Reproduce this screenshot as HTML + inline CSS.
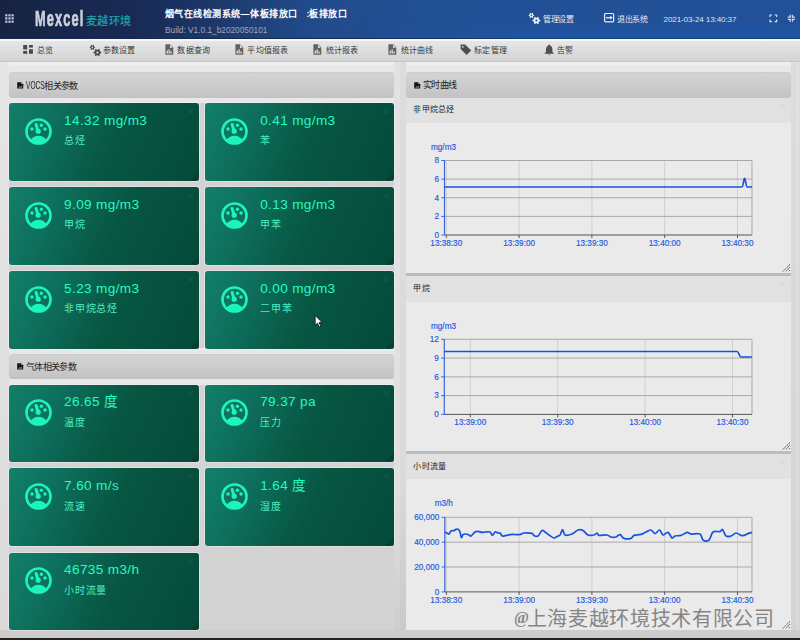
<!DOCTYPE html><html lang="zh-CN"><head><meta charset="utf-8"><style>
*{box-sizing:border-box;margin:0;padding:0}
html,body{width:800px;height:640px;overflow:hidden}
body{position:relative;background:#e8e8e8;font-family:"Liberation Sans",sans-serif;color:#222}
.abs{position:absolute}
.t{position:absolute;white-space:nowrap}
#hdr{left:0;top:0;width:800px;height:38.5px;background:linear-gradient(90deg,#162342 0%,#192a55 17%,#1d386a 27%,#214a8a 38%,#214f94 52%,#21519a 100%);border-bottom:1px solid #122a52}
#nav{left:0;top:38.5px;width:800px;height:23.5px;background:linear-gradient(#f6f6f6 0,#f6f6f6 1.5px,#e6e6e6 2.5px,#d3d3d3 100%);border-bottom:1px solid #c6c6c6}
.navi{position:absolute;top:46.3px;font-size:8px;letter-spacing:0.25px;color:#383838;white-space:nowrap;line-height:10px}
.hd{position:absolute;left:9px;width:385px;height:25.5px;border-radius:3px;background:linear-gradient(#c9c9c9 0,#d3d3d3 1.2px,#cdcdcd 50%,#c2c2c2 100%)}
.hd span{position:absolute;left:16.8px;top:8px;font-size:9px;letter-spacing:-0.6px;line-height:10px;color:#222;white-space:nowrap}
.hd span b{font-weight:normal;font-size:10.6px;display:inline-block;transform:scaleX(0.62);transform-origin:0 50%;width:18.5px;letter-spacing:0;vertical-align:-0.5px}
.card{position:absolute;width:189.4px;box-shadow:0 0 0 0.8px rgba(245,245,245,0.55);height:77.5px;border-radius:3px;background:linear-gradient(115deg,#128069 0%,#0d6e5b 25%,#075642 55%,#044a3b 100%);overflow:hidden}
.card .v{position:absolute;left:55px;top:9.8px;font-size:13.6px;line-height:16px;color:#22fcc4;white-space:nowrap;letter-spacing:0.35px}
.card .l{position:absolute;left:55px;top:32.3px;font-size:10px;letter-spacing:0.75px;line-height:12px;color:#50ecc0;white-space:nowrap}
.card svg.g{position:absolute;left:16px;top:14.8px;width:27px;height:27px}
.card svg.x{position:absolute;right:4.6px;top:5px;width:7px;height:7px}
.card svg.rz{position:absolute;right:0;bottom:0;width:9px;height:9px}
.sub{position:absolute;left:406px;width:385px;background:#eaeaea}
.sub .sh{position:absolute;left:0;top:0;width:385px;height:25px;background:#e1e1e1}
.sub .sh span{position:absolute;left:7.3px;top:7px;font-size:8px;letter-spacing:0.3px;line-height:10px;color:#222;white-space:nowrap}
.cl{font-family:"Liberation Sans",sans-serif;font-size:8.2px;fill:#2258e0;stroke:#2258e0;stroke-width:0.15px}
</style></head><body>
<div id="hdr" class="abs"></div><div class="abs" style="left:350px;top:20px;width:450px;height:18.5px;background:linear-gradient(rgba(30,100,190,0),rgba(30,100,190,0.35));-webkit-mask-image:linear-gradient(90deg,transparent,#000 40%)"></div>
<svg class="abs" style="left:4px;top:13px" width="12" height="11" viewBox="0 0 12 11"><g fill="#b8c4e8">
<rect x="1.2" y="1.2" width="2.2" height="2.2"/><rect x="4.4" y="1.2" width="2.2" height="2.2"/><rect x="7.5" y="1.2" width="2.2" height="2.2"/>
<rect x="1.2" y="4.3" width="2.2" height="2.2"/><rect x="4.4" y="4.3" width="2.2" height="2.2"/><rect x="7.5" y="4.3" width="2.2" height="2.2"/>
<rect x="1.2" y="7.6" width="2.2" height="2.2"/><rect x="4.4" y="7.6" width="2.2" height="2.2"/><rect x="7.5" y="7.6" width="2.2" height="2.2"/></g></svg>
<div class="t" style="left:35.4px;top:6px;font-size:21.3px;font-weight:bold;color:#cdd2dc;line-height:26px;letter-spacing:1.9px;-webkit-text-stroke:0.7px #cdd2dc;transform:scaleX(0.6);transform-origin:0 0">Mexcel</div>
<div class="t" style="left:85.5px;top:15px;font-size:11px;letter-spacing:0.6px;color:#1fa6a9;line-height:13px;-webkit-text-stroke:0.2px #1fa6a9">麦越环境</div>
<div class="t" style="left:164.5px;top:8.5px;font-size:9px;letter-spacing:0.5px;font-weight:bold;color:#fff;line-height:11px">烟气在线检测系统—体板排放口</div><div class="t" style="left:306.5px;top:8.5px;font-size:9px;font-weight:bold;color:#fff;line-height:11px">:</div><div class="t" style="left:309px;top:8.5px;font-size:9px;letter-spacing:0.5px;font-weight:bold;color:#fff;line-height:11px">板排放口</div>
<div class="t" style="left:165px;top:24.8px;font-size:8.3px;color:#9fa9bd;line-height:10px">Build: V1.0.1_b2020050101</div>
<svg class="abs" style="left:528px;top:11.5px" width="14" height="14" viewBox="0 0 14 14"><path d="M5.30 2.78 L6.06 2.95 L6.06 3.85 L5.30 4.02 L4.88 4.74 L5.12 5.48 L4.34 5.93 L3.82 5.35 L2.98 5.35 L2.46 5.93 L1.68 5.48 L1.92 4.74 L1.50 4.02 L0.74 3.85 L0.74 2.95 L1.50 2.78 L1.92 2.06 L1.68 1.32 L2.46 0.87 L2.98 1.45 L3.82 1.45 L4.34 0.87 L5.12 1.32 L4.88 2.06Z" fill="#f0f3f8"/><circle cx="3.4" cy="3.4" r="0.8" fill="#1e4a90"/><path d="M11.14 7.61 L12.25 7.85 L12.25 9.15 L11.14 9.39 L10.54 10.43 L10.89 11.51 L9.76 12.16 L9.00 11.32 L7.80 11.32 L7.04 12.16 L5.91 11.51 L6.26 10.43 L5.66 9.39 L4.55 9.15 L4.55 7.85 L5.66 7.61 L6.26 6.57 L5.91 5.49 L7.04 4.84 L7.80 5.68 L9.00 5.68 L9.76 4.84 L10.89 5.49 L10.54 6.57Z" fill="#f0f3f8"/><circle cx="8.4" cy="8.5" r="1.1" fill="#1e4a90"/></svg>
<div class="t" style="left:543px;top:15.2px;font-size:8px;letter-spacing:-0.5px;color:#e6eaf2;line-height:10px">管理设置</div>
<svg class="abs" style="left:603px;top:12px" width="12" height="11" viewBox="0 0 12 11"><rect x="1.6" y="1.5" width="9" height="8.4" rx="1" fill="none" stroke="#e8eef8" stroke-width="1.2"/><path d="M3 5.7 L8 5.7" stroke="#e8eef8" stroke-width="1.3"/><path d="M7.2 3.6 L9.6 5.7 L7.2 7.8Z" fill="#e8eef8"/></svg>
<div class="t" style="left:617px;top:15.2px;font-size:8px;letter-spacing:-0.5px;color:#e6eaf2;line-height:10px">退出系统</div>
<div class="t" style="left:663.5px;top:14.6px;font-size:8.1px;letter-spacing:-0.12px;color:#dfe5f0;line-height:10px">2021-03-24 13:40:37</div>
<svg class="abs" style="left:768.5px;top:14px" width="9" height="9" viewBox="0 0 9 9"><path d="M1 3V1H3M5.6 1H7.6V3M7.6 5.6V7.6H5.6M3 7.6H1V5.6" fill="none" stroke="#d8e0ee" stroke-width="1.2"/></svg>
<svg class="abs" style="left:786.5px;top:14px" width="9" height="9" viewBox="0 0 9 9"><path d="M0.8 3.2H3.2V0.8M5.4 0.8V3.2H7.8M7.8 5.4H5.4V7.8M3.2 7.8V5.4H0.8" fill="none" stroke="#d8e0ee" stroke-width="1.2"/></svg>
<div id="nav" class="abs"></div>
<svg class="abs" style="left:23px;top:45px" width="11" height="9" viewBox="0 0 11 9"><g fill="#4a4a4a"><rect x="0.2" y="0" width="4" height="4.5"/><rect x="0.2" y="6" width="4" height="2.8"/><rect x="6" y="0" width="3.9" height="2.6"/><rect x="6" y="4.2" width="3.9" height="4.6"/></g></svg>
<svg class="abs" style="left:88.5px;top:43.5px" width="14" height="14" viewBox="0 0 14 14"><path d="M5.30 2.78 L6.06 2.95 L6.06 3.85 L5.30 4.02 L4.88 4.74 L5.12 5.48 L4.34 5.93 L3.82 5.35 L2.98 5.35 L2.46 5.93 L1.68 5.48 L1.92 4.74 L1.50 4.02 L0.74 3.85 L0.74 2.95 L1.50 2.78 L1.92 2.06 L1.68 1.32 L2.46 0.87 L2.98 1.45 L3.82 1.45 L4.34 0.87 L5.12 1.32 L4.88 2.06Z" fill="#4a4a4a"/><circle cx="3.4" cy="3.4" r="0.8" fill="#e6e6e6"/><path d="M11.14 7.61 L12.25 7.85 L12.25 9.15 L11.14 9.39 L10.54 10.43 L10.89 11.51 L9.76 12.16 L9.00 11.32 L7.80 11.32 L7.04 12.16 L5.91 11.51 L6.26 10.43 L5.66 9.39 L4.55 9.15 L4.55 7.85 L5.66 7.61 L6.26 6.57 L5.91 5.49 L7.04 4.84 L7.80 5.68 L9.00 5.68 L9.76 4.84 L10.89 5.49 L10.54 6.57Z" fill="#4a4a4a"/><circle cx="8.4" cy="8.5" r="1.1" fill="#e6e6e6"/></svg>
<svg class="abs" style="left:164.5px;top:44px" width="9" height="11" viewBox="0 0 9 11"><path d="M0.4 0.9 Q0.4 0.3 1.0 0.3 L5.0 0.3 L8.3 3.6 L8.3 10.1 Q8.3 10.7 7.7 10.7 L1.0 10.7 Q0.4 10.7 0.4 10.1Z" fill="#626262"/><path d="M5.0 1.0 L5.0 3.7 L7.7 3.7Z" fill="#f0f0f0"/><rect x="1.7" y="6.6" width="1.1" height="3.0" fill="#f4f4f4"/><rect x="3.6" y="5.4" width="1.1" height="4.2" fill="#f4f4f4"/><rect x="5.5" y="7.4" width="1.1" height="2.2" fill="#f4f4f4"/></svg>
<svg class="abs" style="left:234.5px;top:44px" width="9" height="11" viewBox="0 0 9 11"><path d="M0.4 0.9 Q0.4 0.3 1.0 0.3 L5.0 0.3 L8.3 3.6 L8.3 10.1 Q8.3 10.7 7.7 10.7 L1.0 10.7 Q0.4 10.7 0.4 10.1Z" fill="#626262"/><path d="M5.0 1.0 L5.0 3.7 L7.7 3.7Z" fill="#f0f0f0"/><rect x="1.7" y="6.6" width="1.1" height="3.0" fill="#f4f4f4"/><rect x="3.6" y="5.4" width="1.1" height="4.2" fill="#f4f4f4"/><rect x="5.5" y="7.4" width="1.1" height="2.2" fill="#f4f4f4"/></svg>
<svg class="abs" style="left:312.5px;top:44px" width="9" height="11" viewBox="0 0 9 11"><path d="M0.4 0.9 Q0.4 0.3 1.0 0.3 L5.0 0.3 L8.3 3.6 L8.3 10.1 Q8.3 10.7 7.7 10.7 L1.0 10.7 Q0.4 10.7 0.4 10.1Z" fill="#626262"/><path d="M5.0 1.0 L5.0 3.7 L7.7 3.7Z" fill="#f0f0f0"/><rect x="1.7" y="6.6" width="1.1" height="3.0" fill="#f4f4f4"/><rect x="3.6" y="5.4" width="1.1" height="4.2" fill="#f4f4f4"/><rect x="5.5" y="7.4" width="1.1" height="2.2" fill="#f4f4f4"/></svg>
<svg class="abs" style="left:387.5px;top:44px" width="9" height="11" viewBox="0 0 9 11"><path d="M0.4 0.9 Q0.4 0.3 1.0 0.3 L5.0 0.3 L8.3 3.6 L8.3 10.1 Q8.3 10.7 7.7 10.7 L1.0 10.7 Q0.4 10.7 0.4 10.1Z" fill="#626262"/><path d="M5.0 1.0 L5.0 3.7 L7.7 3.7Z" fill="#f0f0f0"/><rect x="1.7" y="6.6" width="1.1" height="3.0" fill="#f4f4f4"/><rect x="3.6" y="5.4" width="1.1" height="4.2" fill="#f4f4f4"/><rect x="5.5" y="7.4" width="1.1" height="2.2" fill="#f4f4f4"/></svg>
<svg class="abs" style="left:460px;top:43.5px" width="12" height="12" viewBox="0 0 12 12"><path d="M0.6 1.2 Q0.6 0.5 1.3 0.5 L5.2 0.5 L11.2 6.5 L6.6 11.1 L0.6 5.1Z" fill="#4f4f4f"/><circle cx="2.8" cy="2.8" r="0.9" fill="#e4e4e4"/></svg>
<svg class="abs" style="left:543.5px;top:43.5px" width="11" height="12" viewBox="0 0 11 12"><path d="M5.2 0.6 Q6 0.6 6 1.3 Q8.4 2.2 8.4 5 L8.4 7.8 L10 9.8 L0.4 9.8 L2 7.8 L2 5 Q2 2.2 4.4 1.3 Q4.4 0.6 5.2 0.6Z" fill="#505050"/><path d="M4 10.4 Q5.2 12 6.4 10.4Z" fill="#505050"/></svg>
<div class="navi" style="left:37px">总览</div>
<div class="navi" style="left:102.6px">参数设置</div>
<div class="navi" style="left:177.3px">数据查询</div>
<div class="navi" style="left:247.3px">平均值报表</div>
<div class="navi" style="left:325.6px">统计报表</div>
<div class="navi" style="left:400.6px">统计曲线</div>
<div class="navi" style="left:474px">标定管理</div>
<div class="navi" style="left:557px">告警</div>
<div class="abs" style="left:0;top:62px;width:800px;height:2.5px;background:#eeeeee"></div>
<div class="abs" style="left:0;top:62px;width:9px;height:578px;background:linear-gradient(#e6e6e6,#dadada)"></div>
<div class="abs" style="left:394px;top:62px;width:11.5px;height:578px;background:linear-gradient(#e2e2e2 0,#e0e0e0 420px,#cdcdcd 100%)"></div><div class="abs" style="left:400px;top:62px;width:5.5px;height:578px;background:rgba(0,0,0,0.025)"></div>
<div class="abs" style="left:791px;top:62px;width:9px;height:578px;background:linear-gradient(#dddddd,#d4d4d4)"></div><div class="abs" style="left:796.5px;top:62px;width:1px;height:578px;background:rgba(255,255,255,0.25)"></div>
<div class="abs" style="left:9px;top:103px;width:385px;height:245px;background:#d2d2d2"></div>
<div class="abs" style="left:9px;top:384.5px;width:385px;height:246px;background:#d3d3d3"></div>
<div class="abs" style="left:0;top:630px;width:800px;height:8px;background:#cdcdcd"></div>
<div class="abs" style="left:0;top:638px;width:800px;height:2px;background:#222"></div>
<div class="hd" style="top:72px"><svg class="abs" style="left:8px;top:9.6px" width="7" height="7" viewBox="0 0 7 7"><path d="M0.2 0.2 L4.2 0.2 L6.2 2.2 L6.2 6.6 L0.2 6.6Z" fill="#141418"/><path d="M4.4 0.6 L4.4 2.0 L5.8 2.0Z" fill="#d8d8e0"/><path d="M1.2 5.8 L2.6 3.9 L3.5 4.8 L4.6 3.4 L5.4 5.8Z" fill="#7c74a4"/></svg><span><b>VOCS</b>相关参数</span></div>
<div class="hd" style="top:353.5px"><svg class="abs" style="left:8px;top:9.6px" width="7" height="7" viewBox="0 0 7 7"><path d="M0.2 0.2 L4.2 0.2 L6.2 2.2 L6.2 6.6 L0.2 6.6Z" fill="#141418"/><path d="M4.4 0.6 L4.4 2.0 L5.8 2.0Z" fill="#d8d8e0"/><path d="M1.2 5.8 L2.6 3.9 L3.5 4.8 L4.6 3.4 L5.4 5.8Z" fill="#7c74a4"/></svg><span>气体相关参数</span></div>
<div class="card" style="left:9.1px;top:103px;width:189.7px"><svg class="g" viewBox="0 0 27 27"><circle cx="13.5" cy="13.5" r="12" fill="none" stroke="#1cf4be" stroke-width="2.7"/>
<path d="M5.8 21.6 A9.6 9.6 0 0 1 21.2 21.6 A10.3 10.3 0 0 1 5.8 21.6Z" fill="#1cf4be"/>
<circle cx="13.2" cy="13.2" r="2.6" fill="#1cf4be"/><path d="M11.6 13.6 L9.4 5.9 Q10.6 4.6 12.3 5.3 L14.7 12.9Z" fill="#1cf4be"/>
<circle cx="7.0" cy="11.0" r="1.75" fill="#1cf4be"/><circle cx="16.4" cy="7.3" r="1.75" fill="#1cf4be"/><circle cx="20.0" cy="11.0" r="1.75" fill="#1cf4be"/></svg><div class="v">14.32 mg/m3</div><div class="l">总烃</div><svg class="x" viewBox="0 0 7 7"><path d="M0.6 0.6L6.4 6.4M6.4 0.6L0.6 6.4" stroke="#1c6553" stroke-width="0.75"/></svg><svg class="rz" viewBox="0 0 9 9"><path d="M9 1L1 9M9 4L4 9M9 7L7 9" stroke="#0b2a22" stroke-width="0.9"/></svg></div>
<div class="card" style="left:205.2px;top:103px;width:189.0px"><svg class="g" viewBox="0 0 27 27"><circle cx="13.5" cy="13.5" r="12" fill="none" stroke="#1cf4be" stroke-width="2.7"/>
<path d="M5.8 21.6 A9.6 9.6 0 0 1 21.2 21.6 A10.3 10.3 0 0 1 5.8 21.6Z" fill="#1cf4be"/>
<circle cx="13.2" cy="13.2" r="2.6" fill="#1cf4be"/><path d="M11.6 13.6 L9.4 5.9 Q10.6 4.6 12.3 5.3 L14.7 12.9Z" fill="#1cf4be"/>
<circle cx="7.0" cy="11.0" r="1.75" fill="#1cf4be"/><circle cx="16.4" cy="7.3" r="1.75" fill="#1cf4be"/><circle cx="20.0" cy="11.0" r="1.75" fill="#1cf4be"/></svg><div class="v">0.41 mg/m3</div><div class="l">苯</div><svg class="x" viewBox="0 0 7 7"><path d="M0.6 0.6L6.4 6.4M6.4 0.6L0.6 6.4" stroke="#1c6553" stroke-width="0.75"/></svg><svg class="rz" viewBox="0 0 9 9"><path d="M9 1L1 9M9 4L4 9M9 7L7 9" stroke="#0b2a22" stroke-width="0.9"/></svg></div>
<div class="card" style="left:9.1px;top:187px;width:189.7px"><svg class="g" viewBox="0 0 27 27"><circle cx="13.5" cy="13.5" r="12" fill="none" stroke="#1cf4be" stroke-width="2.7"/>
<path d="M5.8 21.6 A9.6 9.6 0 0 1 21.2 21.6 A10.3 10.3 0 0 1 5.8 21.6Z" fill="#1cf4be"/>
<circle cx="13.2" cy="13.2" r="2.6" fill="#1cf4be"/><path d="M11.6 13.6 L9.4 5.9 Q10.6 4.6 12.3 5.3 L14.7 12.9Z" fill="#1cf4be"/>
<circle cx="7.0" cy="11.0" r="1.75" fill="#1cf4be"/><circle cx="16.4" cy="7.3" r="1.75" fill="#1cf4be"/><circle cx="20.0" cy="11.0" r="1.75" fill="#1cf4be"/></svg><div class="v">9.09 mg/m3</div><div class="l">甲烷</div><svg class="x" viewBox="0 0 7 7"><path d="M0.6 0.6L6.4 6.4M6.4 0.6L0.6 6.4" stroke="#1c6553" stroke-width="0.75"/></svg><svg class="rz" viewBox="0 0 9 9"><path d="M9 1L1 9M9 4L4 9M9 7L7 9" stroke="#0b2a22" stroke-width="0.9"/></svg></div>
<div class="card" style="left:205.2px;top:187px;width:189.0px"><svg class="g" viewBox="0 0 27 27"><circle cx="13.5" cy="13.5" r="12" fill="none" stroke="#1cf4be" stroke-width="2.7"/>
<path d="M5.8 21.6 A9.6 9.6 0 0 1 21.2 21.6 A10.3 10.3 0 0 1 5.8 21.6Z" fill="#1cf4be"/>
<circle cx="13.2" cy="13.2" r="2.6" fill="#1cf4be"/><path d="M11.6 13.6 L9.4 5.9 Q10.6 4.6 12.3 5.3 L14.7 12.9Z" fill="#1cf4be"/>
<circle cx="7.0" cy="11.0" r="1.75" fill="#1cf4be"/><circle cx="16.4" cy="7.3" r="1.75" fill="#1cf4be"/><circle cx="20.0" cy="11.0" r="1.75" fill="#1cf4be"/></svg><div class="v">0.13 mg/m3</div><div class="l">甲苯</div><svg class="x" viewBox="0 0 7 7"><path d="M0.6 0.6L6.4 6.4M6.4 0.6L0.6 6.4" stroke="#1c6553" stroke-width="0.75"/></svg><svg class="rz" viewBox="0 0 9 9"><path d="M9 1L1 9M9 4L4 9M9 7L7 9" stroke="#0b2a22" stroke-width="0.9"/></svg></div>
<div class="card" style="left:9.1px;top:271px;width:189.7px"><svg class="g" viewBox="0 0 27 27"><circle cx="13.5" cy="13.5" r="12" fill="none" stroke="#1cf4be" stroke-width="2.7"/>
<path d="M5.8 21.6 A9.6 9.6 0 0 1 21.2 21.6 A10.3 10.3 0 0 1 5.8 21.6Z" fill="#1cf4be"/>
<circle cx="13.2" cy="13.2" r="2.6" fill="#1cf4be"/><path d="M11.6 13.6 L9.4 5.9 Q10.6 4.6 12.3 5.3 L14.7 12.9Z" fill="#1cf4be"/>
<circle cx="7.0" cy="11.0" r="1.75" fill="#1cf4be"/><circle cx="16.4" cy="7.3" r="1.75" fill="#1cf4be"/><circle cx="20.0" cy="11.0" r="1.75" fill="#1cf4be"/></svg><div class="v">5.23 mg/m3</div><div class="l">非甲烷总烃</div><svg class="x" viewBox="0 0 7 7"><path d="M0.6 0.6L6.4 6.4M6.4 0.6L0.6 6.4" stroke="#1c6553" stroke-width="0.75"/></svg><svg class="rz" viewBox="0 0 9 9"><path d="M9 1L1 9M9 4L4 9M9 7L7 9" stroke="#0b2a22" stroke-width="0.9"/></svg></div>
<div class="card" style="left:205.2px;top:271px;width:189.0px"><svg class="g" viewBox="0 0 27 27"><circle cx="13.5" cy="13.5" r="12" fill="none" stroke="#1cf4be" stroke-width="2.7"/>
<path d="M5.8 21.6 A9.6 9.6 0 0 1 21.2 21.6 A10.3 10.3 0 0 1 5.8 21.6Z" fill="#1cf4be"/>
<circle cx="13.2" cy="13.2" r="2.6" fill="#1cf4be"/><path d="M11.6 13.6 L9.4 5.9 Q10.6 4.6 12.3 5.3 L14.7 12.9Z" fill="#1cf4be"/>
<circle cx="7.0" cy="11.0" r="1.75" fill="#1cf4be"/><circle cx="16.4" cy="7.3" r="1.75" fill="#1cf4be"/><circle cx="20.0" cy="11.0" r="1.75" fill="#1cf4be"/></svg><div class="v">0.00 mg/m3</div><div class="l">二甲苯</div><svg class="x" viewBox="0 0 7 7"><path d="M0.6 0.6L6.4 6.4M6.4 0.6L0.6 6.4" stroke="#1c6553" stroke-width="0.75"/></svg><svg class="rz" viewBox="0 0 9 9"><path d="M9 1L1 9M9 4L4 9M9 7L7 9" stroke="#0b2a22" stroke-width="0.9"/></svg></div>
<div class="card" style="left:9.1px;top:384.5px;width:189.7px"><svg class="g" viewBox="0 0 27 27"><circle cx="13.5" cy="13.5" r="12" fill="none" stroke="#1cf4be" stroke-width="2.7"/>
<path d="M5.8 21.6 A9.6 9.6 0 0 1 21.2 21.6 A10.3 10.3 0 0 1 5.8 21.6Z" fill="#1cf4be"/>
<circle cx="13.2" cy="13.2" r="2.6" fill="#1cf4be"/><path d="M11.6 13.6 L9.4 5.9 Q10.6 4.6 12.3 5.3 L14.7 12.9Z" fill="#1cf4be"/>
<circle cx="7.0" cy="11.0" r="1.75" fill="#1cf4be"/><circle cx="16.4" cy="7.3" r="1.75" fill="#1cf4be"/><circle cx="20.0" cy="11.0" r="1.75" fill="#1cf4be"/></svg><div class="v">26.65 度</div><div class="l">温度</div><svg class="x" viewBox="0 0 7 7"><path d="M0.6 0.6L6.4 6.4M6.4 0.6L0.6 6.4" stroke="#1c6553" stroke-width="0.75"/></svg><svg class="rz" viewBox="0 0 9 9"><path d="M9 1L1 9M9 4L4 9M9 7L7 9" stroke="#0b2a22" stroke-width="0.9"/></svg></div>
<div class="card" style="left:205.2px;top:384.5px;width:189.0px"><svg class="g" viewBox="0 0 27 27"><circle cx="13.5" cy="13.5" r="12" fill="none" stroke="#1cf4be" stroke-width="2.7"/>
<path d="M5.8 21.6 A9.6 9.6 0 0 1 21.2 21.6 A10.3 10.3 0 0 1 5.8 21.6Z" fill="#1cf4be"/>
<circle cx="13.2" cy="13.2" r="2.6" fill="#1cf4be"/><path d="M11.6 13.6 L9.4 5.9 Q10.6 4.6 12.3 5.3 L14.7 12.9Z" fill="#1cf4be"/>
<circle cx="7.0" cy="11.0" r="1.75" fill="#1cf4be"/><circle cx="16.4" cy="7.3" r="1.75" fill="#1cf4be"/><circle cx="20.0" cy="11.0" r="1.75" fill="#1cf4be"/></svg><div class="v">79.37 pa</div><div class="l">压力</div><svg class="x" viewBox="0 0 7 7"><path d="M0.6 0.6L6.4 6.4M6.4 0.6L0.6 6.4" stroke="#1c6553" stroke-width="0.75"/></svg><svg class="rz" viewBox="0 0 9 9"><path d="M9 1L1 9M9 4L4 9M9 7L7 9" stroke="#0b2a22" stroke-width="0.9"/></svg></div>
<div class="card" style="left:9.1px;top:468.3px;width:189.7px"><svg class="g" viewBox="0 0 27 27"><circle cx="13.5" cy="13.5" r="12" fill="none" stroke="#1cf4be" stroke-width="2.7"/>
<path d="M5.8 21.6 A9.6 9.6 0 0 1 21.2 21.6 A10.3 10.3 0 0 1 5.8 21.6Z" fill="#1cf4be"/>
<circle cx="13.2" cy="13.2" r="2.6" fill="#1cf4be"/><path d="M11.6 13.6 L9.4 5.9 Q10.6 4.6 12.3 5.3 L14.7 12.9Z" fill="#1cf4be"/>
<circle cx="7.0" cy="11.0" r="1.75" fill="#1cf4be"/><circle cx="16.4" cy="7.3" r="1.75" fill="#1cf4be"/><circle cx="20.0" cy="11.0" r="1.75" fill="#1cf4be"/></svg><div class="v">7.60 m/s</div><div class="l">流速</div><svg class="x" viewBox="0 0 7 7"><path d="M0.6 0.6L6.4 6.4M6.4 0.6L0.6 6.4" stroke="#1c6553" stroke-width="0.75"/></svg><svg class="rz" viewBox="0 0 9 9"><path d="M9 1L1 9M9 4L4 9M9 7L7 9" stroke="#0b2a22" stroke-width="0.9"/></svg></div>
<div class="card" style="left:205.2px;top:468.3px;width:189.0px"><svg class="g" viewBox="0 0 27 27"><circle cx="13.5" cy="13.5" r="12" fill="none" stroke="#1cf4be" stroke-width="2.7"/>
<path d="M5.8 21.6 A9.6 9.6 0 0 1 21.2 21.6 A10.3 10.3 0 0 1 5.8 21.6Z" fill="#1cf4be"/>
<circle cx="13.2" cy="13.2" r="2.6" fill="#1cf4be"/><path d="M11.6 13.6 L9.4 5.9 Q10.6 4.6 12.3 5.3 L14.7 12.9Z" fill="#1cf4be"/>
<circle cx="7.0" cy="11.0" r="1.75" fill="#1cf4be"/><circle cx="16.4" cy="7.3" r="1.75" fill="#1cf4be"/><circle cx="20.0" cy="11.0" r="1.75" fill="#1cf4be"/></svg><div class="v">1.64 度</div><div class="l">湿度</div><svg class="x" viewBox="0 0 7 7"><path d="M0.6 0.6L6.4 6.4M6.4 0.6L0.6 6.4" stroke="#1c6553" stroke-width="0.75"/></svg><svg class="rz" viewBox="0 0 9 9"><path d="M9 1L1 9M9 4L4 9M9 7L7 9" stroke="#0b2a22" stroke-width="0.9"/></svg></div>
<div class="card" style="left:9.1px;top:552.5px;width:189.7px"><svg class="g" viewBox="0 0 27 27"><circle cx="13.5" cy="13.5" r="12" fill="none" stroke="#1cf4be" stroke-width="2.7"/>
<path d="M5.8 21.6 A9.6 9.6 0 0 1 21.2 21.6 A10.3 10.3 0 0 1 5.8 21.6Z" fill="#1cf4be"/>
<circle cx="13.2" cy="13.2" r="2.6" fill="#1cf4be"/><path d="M11.6 13.6 L9.4 5.9 Q10.6 4.6 12.3 5.3 L14.7 12.9Z" fill="#1cf4be"/>
<circle cx="7.0" cy="11.0" r="1.75" fill="#1cf4be"/><circle cx="16.4" cy="7.3" r="1.75" fill="#1cf4be"/><circle cx="20.0" cy="11.0" r="1.75" fill="#1cf4be"/></svg><div class="v">46735 m3/h</div><div class="l">小时流量</div><svg class="x" viewBox="0 0 7 7"><path d="M0.6 0.6L6.4 6.4M6.4 0.6L0.6 6.4" stroke="#1c6553" stroke-width="0.75"/></svg><svg class="rz" viewBox="0 0 9 9"><path d="M9 1L1 9M9 4L4 9M9 7L7 9" stroke="#0b2a22" stroke-width="0.9"/></svg></div>
<div class="sub" style="top:97.5px;height:175.3px"><div class="sh"><span>非甲烷总烃</span></div><svg class="abs" style="right:5px;top:5px" width="8" height="7" viewBox="0 0 8 7"><path d="M1 0.5L7 6.5M7 0.5L1 6.5" stroke="#d2d2d2" stroke-width="0.8"/></svg><svg class="abs" style="right:0.5px;bottom:0.5px" width="9" height="8" viewBox="0 0 9 8"><path d="M8 0.3L0.8 7.5M8 3.2L3.7 7.5M8 6.2L6.7 7.5" stroke="#3a3a3a" stroke-width="1" stroke-dasharray="1.1 0.5"/></svg></div>
<div class="abs" style="left:406px;top:272.8px;width:385px;height:2.8px;background:#bababa"></div>
<div class="sub" style="top:275.6px;height:175px"><div class="sh" style="height:26px"><span style="top:8.4px">甲烷</span></div><svg class="abs" style="right:5px;top:5px" width="8" height="7" viewBox="0 0 8 7"><path d="M1 0.5L7 6.5M7 0.5L1 6.5" stroke="#d2d2d2" stroke-width="0.8"/></svg><svg class="abs" style="right:0.5px;bottom:0.5px" width="9" height="8" viewBox="0 0 9 8"><path d="M8 0.3L0.8 7.5M8 3.2L3.7 7.5M8 6.2L6.7 7.5" stroke="#3a3a3a" stroke-width="1" stroke-dasharray="1.1 0.5"/></svg></div>
<div class="abs" style="left:406px;top:450.6px;width:385px;height:3.8px;background:#bdbdbd"></div>
<div class="sub" style="top:454.4px;height:175px"><div class="sh"><span style="top:8px">小时流量</span></div><svg class="abs" style="right:5px;top:5px" width="8" height="7" viewBox="0 0 8 7"><path d="M1 0.5L7 6.5M7 0.5L1 6.5" stroke="#d2d2d2" stroke-width="0.8"/></svg><svg class="abs" style="right:0.5px;bottom:0.5px" width="9" height="8" viewBox="0 0 9 8"><path d="M8 0.3L0.8 7.5M8 3.2L3.7 7.5M8 6.2L6.7 7.5" stroke="#3a3a3a" stroke-width="1" stroke-dasharray="1.1 0.5"/></svg></div>
<div class="hd" style="left:406px;top:72px"><svg class="abs" style="left:8px;top:9.6px" width="7" height="7" viewBox="0 0 7 7"><path d="M0.2 0.2 L4.2 0.2 L6.2 2.2 L6.2 6.6 L0.2 6.6Z" fill="#141418"/><path d="M4.4 0.6 L4.4 2.0 L5.8 2.0Z" fill="#d8d8e0"/><path d="M1.2 5.8 L2.6 3.9 L3.5 4.8 L4.6 3.4 L5.4 5.8Z" fill="#7c74a4"/></svg><span>实时曲线</span></div>
<svg class="abs" style="left:0;top:0" width="800" height="640" viewBox="0 0 800 640">
<line x1="446.3" y1="160.5" x2="446.3" y2="235" stroke="#cfcfcf" stroke-width="1"/>
<line x1="519.1" y1="160.5" x2="519.1" y2="235" stroke="#cfcfcf" stroke-width="1"/>
<line x1="591.9" y1="160.5" x2="591.9" y2="235" stroke="#cfcfcf" stroke-width="1"/>
<line x1="664.7" y1="160.5" x2="664.7" y2="235" stroke="#cfcfcf" stroke-width="1"/>
<line x1="737.5" y1="160.5" x2="737.5" y2="235" stroke="#cfcfcf" stroke-width="1"/>
<line x1="752" y1="160.5" x2="752" y2="235" stroke="#a9a9a9" stroke-width="1"/>
<line x1="444.5" y1="216.4" x2="752" y2="216.4" stroke="#a9a9a9" stroke-width="1"/>
<line x1="444.5" y1="197.75" x2="752" y2="197.75" stroke="#a9a9a9" stroke-width="1"/>
<line x1="444.5" y1="179.1" x2="752" y2="179.1" stroke="#a9a9a9" stroke-width="1"/>
<line x1="444.5" y1="160.5" x2="752" y2="160.5" stroke="#a9a9a9" stroke-width="1"/>
<line x1="444.5" y1="235" x2="752" y2="235" stroke="#555" stroke-width="1"/>
<line x1="446.3" y1="235" x2="446.3" y2="238" stroke="#555" stroke-width="1"/>
<line x1="519.1" y1="235" x2="519.1" y2="238" stroke="#555" stroke-width="1"/>
<line x1="591.9" y1="235" x2="591.9" y2="238" stroke="#555" stroke-width="1"/>
<line x1="664.7" y1="235" x2="664.7" y2="238" stroke="#555" stroke-width="1"/>
<line x1="737.5" y1="235" x2="737.5" y2="238" stroke="#555" stroke-width="1"/>
<line x1="444.5" y1="160.5" x2="444.5" y2="235" stroke="#3a66dd" stroke-width="1.2"/>
<line x1="441.3" y1="235" x2="444.5" y2="235" stroke="#3a66dd" stroke-width="1"/>
<line x1="441.3" y1="216.4" x2="444.5" y2="216.4" stroke="#3a66dd" stroke-width="1"/>
<line x1="441.3" y1="197.75" x2="444.5" y2="197.75" stroke="#3a66dd" stroke-width="1"/>
<line x1="441.3" y1="179.1" x2="444.5" y2="179.1" stroke="#3a66dd" stroke-width="1"/>
<line x1="441.3" y1="160.5" x2="444.5" y2="160.5" stroke="#3a66dd" stroke-width="1"/>
<text class="cl" x="439.0" y="237.8" text-anchor="end">0</text>
<text class="cl" x="439.0" y="219.20000000000002" text-anchor="end">2</text>
<text class="cl" x="439.0" y="200.55" text-anchor="end">4</text>
<text class="cl" x="439.0" y="181.9" text-anchor="end">6</text>
<text class="cl" x="439.0" y="163.3" text-anchor="end">8</text>
<text class="cl" x="446.3" y="245.7" text-anchor="middle">13:38:30</text>
<text class="cl" x="519.1" y="245.7" text-anchor="middle">13:39:00</text>
<text class="cl" x="591.9" y="245.7" text-anchor="middle">13:39:30</text>
<text class="cl" x="664.7" y="245.7" text-anchor="middle">13:40:00</text>
<text class="cl" x="737.5" y="245.7" text-anchor="middle">13:40:30</text>
<text class="cl" x="431" y="150">mg/m3</text>
<path d="M444.5 187 L741.8 187 C743.3 187 743.6 178.4 744.6 178.4 C745.6 178.4 745.9 187 747.4 187 L752 187" fill="none" stroke="#1a52e0" stroke-width="1.7" stroke-linejoin="round"/>
<line x1="470.3" y1="339.3" x2="470.3" y2="414.4" stroke="#cfcfcf" stroke-width="1"/>
<line x1="557.7" y1="339.3" x2="557.7" y2="414.4" stroke="#cfcfcf" stroke-width="1"/>
<line x1="645.1" y1="339.3" x2="645.1" y2="414.4" stroke="#cfcfcf" stroke-width="1"/>
<line x1="732.5" y1="339.3" x2="732.5" y2="414.4" stroke="#cfcfcf" stroke-width="1"/>
<line x1="752" y1="339.3" x2="752" y2="414.4" stroke="#a9a9a9" stroke-width="1"/>
<line x1="444.3" y1="395.6" x2="752" y2="395.6" stroke="#a9a9a9" stroke-width="1"/>
<line x1="444.3" y1="376.85" x2="752" y2="376.85" stroke="#a9a9a9" stroke-width="1"/>
<line x1="444.3" y1="358.1" x2="752" y2="358.1" stroke="#a9a9a9" stroke-width="1"/>
<line x1="444.3" y1="339.3" x2="752" y2="339.3" stroke="#a9a9a9" stroke-width="1"/>
<line x1="444.3" y1="414.4" x2="752" y2="414.4" stroke="#555" stroke-width="1"/>
<line x1="470.3" y1="414.4" x2="470.3" y2="417.4" stroke="#555" stroke-width="1"/>
<line x1="557.7" y1="414.4" x2="557.7" y2="417.4" stroke="#555" stroke-width="1"/>
<line x1="645.1" y1="414.4" x2="645.1" y2="417.4" stroke="#555" stroke-width="1"/>
<line x1="732.5" y1="414.4" x2="732.5" y2="417.4" stroke="#555" stroke-width="1"/>
<line x1="444.3" y1="339.3" x2="444.3" y2="414.4" stroke="#3a66dd" stroke-width="1.2"/>
<line x1="441.1" y1="414.4" x2="444.3" y2="414.4" stroke="#3a66dd" stroke-width="1"/>
<line x1="441.1" y1="395.6" x2="444.3" y2="395.6" stroke="#3a66dd" stroke-width="1"/>
<line x1="441.1" y1="376.85" x2="444.3" y2="376.85" stroke="#3a66dd" stroke-width="1"/>
<line x1="441.1" y1="358.1" x2="444.3" y2="358.1" stroke="#3a66dd" stroke-width="1"/>
<line x1="441.1" y1="339.3" x2="444.3" y2="339.3" stroke="#3a66dd" stroke-width="1"/>
<text class="cl" x="438.8" y="417.2" text-anchor="end">0</text>
<text class="cl" x="438.8" y="398.40000000000003" text-anchor="end">3</text>
<text class="cl" x="438.8" y="379.65000000000003" text-anchor="end">6</text>
<text class="cl" x="438.8" y="360.90000000000003" text-anchor="end">9</text>
<text class="cl" x="438.8" y="342.1" text-anchor="end">12</text>
<text class="cl" x="470.3" y="425.09999999999997" text-anchor="middle">13:39:00</text>
<text class="cl" x="557.7" y="425.09999999999997" text-anchor="middle">13:39:30</text>
<text class="cl" x="645.1" y="425.09999999999997" text-anchor="middle">13:40:00</text>
<text class="cl" x="732.5" y="425.09999999999997" text-anchor="middle">13:40:30</text>
<text class="cl" x="431" y="328.7">mg/m3</text>
<path d="M444.3 351.5 L737.2 351.5 C738.6 351.5 739.4 357 741 357 L752 357" fill="none" stroke="#1a52e0" stroke-width="1.7" stroke-linejoin="round"/>
<line x1="446.3" y1="517.3" x2="446.3" y2="591.9" stroke="#cfcfcf" stroke-width="1"/>
<line x1="519.1" y1="517.3" x2="519.1" y2="591.9" stroke="#cfcfcf" stroke-width="1"/>
<line x1="591.9" y1="517.3" x2="591.9" y2="591.9" stroke="#cfcfcf" stroke-width="1"/>
<line x1="664.7" y1="517.3" x2="664.7" y2="591.9" stroke="#cfcfcf" stroke-width="1"/>
<line x1="737.5" y1="517.3" x2="737.5" y2="591.9" stroke="#cfcfcf" stroke-width="1"/>
<line x1="752" y1="517.3" x2="752" y2="591.9" stroke="#a9a9a9" stroke-width="1"/>
<line x1="444.8" y1="567.03" x2="752" y2="567.03" stroke="#a9a9a9" stroke-width="1"/>
<line x1="444.8" y1="542.17" x2="752" y2="542.17" stroke="#a9a9a9" stroke-width="1"/>
<line x1="444.8" y1="517.3" x2="752" y2="517.3" stroke="#a9a9a9" stroke-width="1"/>
<line x1="444.8" y1="591.9" x2="752" y2="591.9" stroke="#555" stroke-width="1"/>
<line x1="446.3" y1="591.9" x2="446.3" y2="594.9" stroke="#555" stroke-width="1"/>
<line x1="519.1" y1="591.9" x2="519.1" y2="594.9" stroke="#555" stroke-width="1"/>
<line x1="591.9" y1="591.9" x2="591.9" y2="594.9" stroke="#555" stroke-width="1"/>
<line x1="664.7" y1="591.9" x2="664.7" y2="594.9" stroke="#555" stroke-width="1"/>
<line x1="737.5" y1="591.9" x2="737.5" y2="594.9" stroke="#555" stroke-width="1"/>
<line x1="444.8" y1="517.3" x2="444.8" y2="591.9" stroke="#3a66dd" stroke-width="1.2"/>
<line x1="441.6" y1="591.9" x2="444.8" y2="591.9" stroke="#3a66dd" stroke-width="1"/>
<line x1="441.6" y1="567.03" x2="444.8" y2="567.03" stroke="#3a66dd" stroke-width="1"/>
<line x1="441.6" y1="542.17" x2="444.8" y2="542.17" stroke="#3a66dd" stroke-width="1"/>
<line x1="441.6" y1="517.3" x2="444.8" y2="517.3" stroke="#3a66dd" stroke-width="1"/>
<text class="cl" x="439.3" y="594.6999999999999" text-anchor="end">0</text>
<text class="cl" x="439.3" y="569.8299999999999" text-anchor="end">20,000</text>
<text class="cl" x="439.3" y="544.9699999999999" text-anchor="end">40,000</text>
<text class="cl" x="439.3" y="520.0999999999999" text-anchor="end">60,000</text>
<text class="cl" x="446.3" y="602.6" text-anchor="middle">13:38:30</text>
<text class="cl" x="519.1" y="602.6" text-anchor="middle">13:39:00</text>
<text class="cl" x="591.9" y="602.6" text-anchor="middle">13:39:30</text>
<text class="cl" x="664.7" y="602.6" text-anchor="middle">13:40:00</text>
<text class="cl" x="737.5" y="602.6" text-anchor="middle">13:40:30</text>
<text class="cl" x="434.7" y="506">m3/h</text>
<path d="M444.8 532.4 C445.19 532.50 446.26 532.72 447 533 C447.74 533.28 448.30 534.35 449 534 C449.70 533.65 450.12 531.60 451 531 C451.88 530.40 453.12 530.88 454 530.6 C454.88 530.32 455.23 529.61 456 529.4 C456.77 529.19 457.70 528.94 458.4 529.4 C459.10 529.86 459.48 530.56 460 532 C460.52 533.44 460.88 537.14 461.4 537.6 C461.92 538.06 462.19 535.23 463 534.6 C463.81 533.97 464.95 533.93 466 534 C467.05 534.07 468.12 534.65 469 535 C469.88 535.35 469.95 536.52 471 536 C472.05 535.48 473.77 532.80 475 532 C476.23 531.20 476.77 531.33 478 531.4 C479.23 531.47 480.60 532.29 482 532.4 C483.40 532.50 484.60 532.07 486 532 C487.40 531.93 488.88 531.40 490 532 C491.12 532.60 491.52 535.40 492.4 535.4 C493.27 535.40 494.02 532.42 495 532 C495.98 531.58 497.12 532.83 498 533 C498.88 533.17 499.23 532.48 500 533 C500.77 533.52 501.35 535.58 502.4 536 C503.45 536.42 504.32 535.68 506 535.4 C507.68 535.12 510.25 534.54 512 534.4 C513.75 534.26 514.60 534.57 516 534.6 C517.40 534.63 518.60 534.88 520 534.6 C521.40 534.32 521.90 533.21 524 533 C526.10 532.79 530.25 532.94 532 533.4 C533.75 533.86 532.95 535.14 534 535.6 C535.05 536.06 536.60 536.88 538 536 C539.40 535.12 540.77 531.30 542 530.6 C543.23 529.90 543.77 531.23 545 532 C546.23 532.77 547.42 533.95 549 535 C550.58 536.05 552.60 537.75 554 538 C555.40 538.25 555.95 536.92 557 536.4 C558.05 535.88 559.02 536.19 560 535 C560.98 533.81 561.73 529.60 562.6 529.6 C563.48 529.60 563.36 534.23 565 535 C566.64 535.77 569.73 534.88 572 534 C574.27 533.12 576.08 530.63 578 530 C579.92 529.37 581.25 529.52 583 530.4 C584.75 531.27 586.08 534.20 588 535 C589.92 535.80 592.42 535.35 594 535 C595.58 534.65 596.12 532.93 597 533 C597.88 533.07 597.25 535.05 599 535.4 C600.75 535.75 604.90 534.72 607 535 C609.10 535.28 609.42 536.65 611 537 C612.58 537.35 614.42 537.42 616 537 C617.58 536.58 618.60 534.36 620 534.6 C621.40 534.85 622.08 537.74 624 538.4 C625.92 539.06 629.25 538.92 631 538.4 C632.75 537.88 632.25 536.10 634 535.4 C635.75 534.70 638.90 535.00 641 534.4 C643.10 533.80 644.25 532.77 646 532 C647.75 531.23 649.42 529.72 651 530 C652.58 530.28 653.50 533.60 655 533.6 C656.50 533.60 658.20 529.75 659.6 530 C661.00 530.25 661.53 534.58 663 535 C664.47 535.42 666.42 531.88 668 532.4 C669.58 532.92 670.77 537.37 672 538 C673.23 538.63 673.42 536.46 675 536 C676.58 535.54 678.90 536.03 681 535.4 C683.10 534.77 685.25 532.64 687 532.4 C688.75 532.15 688.73 533.72 691 534 C693.27 534.28 697.90 532.95 700 534 C702.10 535.05 701.42 538.95 703 540 C704.58 541.05 707.25 541.40 709 540 C710.75 538.60 711.08 533.47 713 532 C714.92 530.53 718.32 532.02 720 531.6 C721.68 531.18 721.55 528.83 722.6 529.6 C723.65 530.37 724.53 534.88 726 536 C727.47 537.12 729.25 536.52 731 536 C732.75 535.48 734.25 533.11 736 533 C737.75 532.89 739.60 534.98 741 535.4 C742.40 535.82 742.77 535.71 744 535.4 C745.23 535.09 746.60 534.12 748 533.6 C749.40 533.08 751.30 532.61 752 532.4" fill="none" stroke="#1a52e0" stroke-width="1.7" stroke-linejoin="round"/>
</svg>
<div class="t" style="left:514px;top:609px;font-size:16px;font-family:'Liberation Serif',serif;font-weight:bold;color:#858585;line-height:18px">@</div>
<div class="t" style="left:526.5px;top:607.8px;font-size:20px;letter-spacing:0.7px;font-weight:500;color:#858585;line-height:22px">上海麦越环境技术有限公司</div>
<svg class="abs" style="left:0;top:0" width="800" height="640" viewBox="0 0 800 640"><path d="M315.2 315.4 L315.2 325.2 L317.4 323.2 L319.4 327.0 L320.9 326.3 L318.9 322.6 L322.0 322.4Z" fill="#fff" stroke="#000" stroke-width="0.7" stroke-linejoin="round"/></svg>
</body></html>
